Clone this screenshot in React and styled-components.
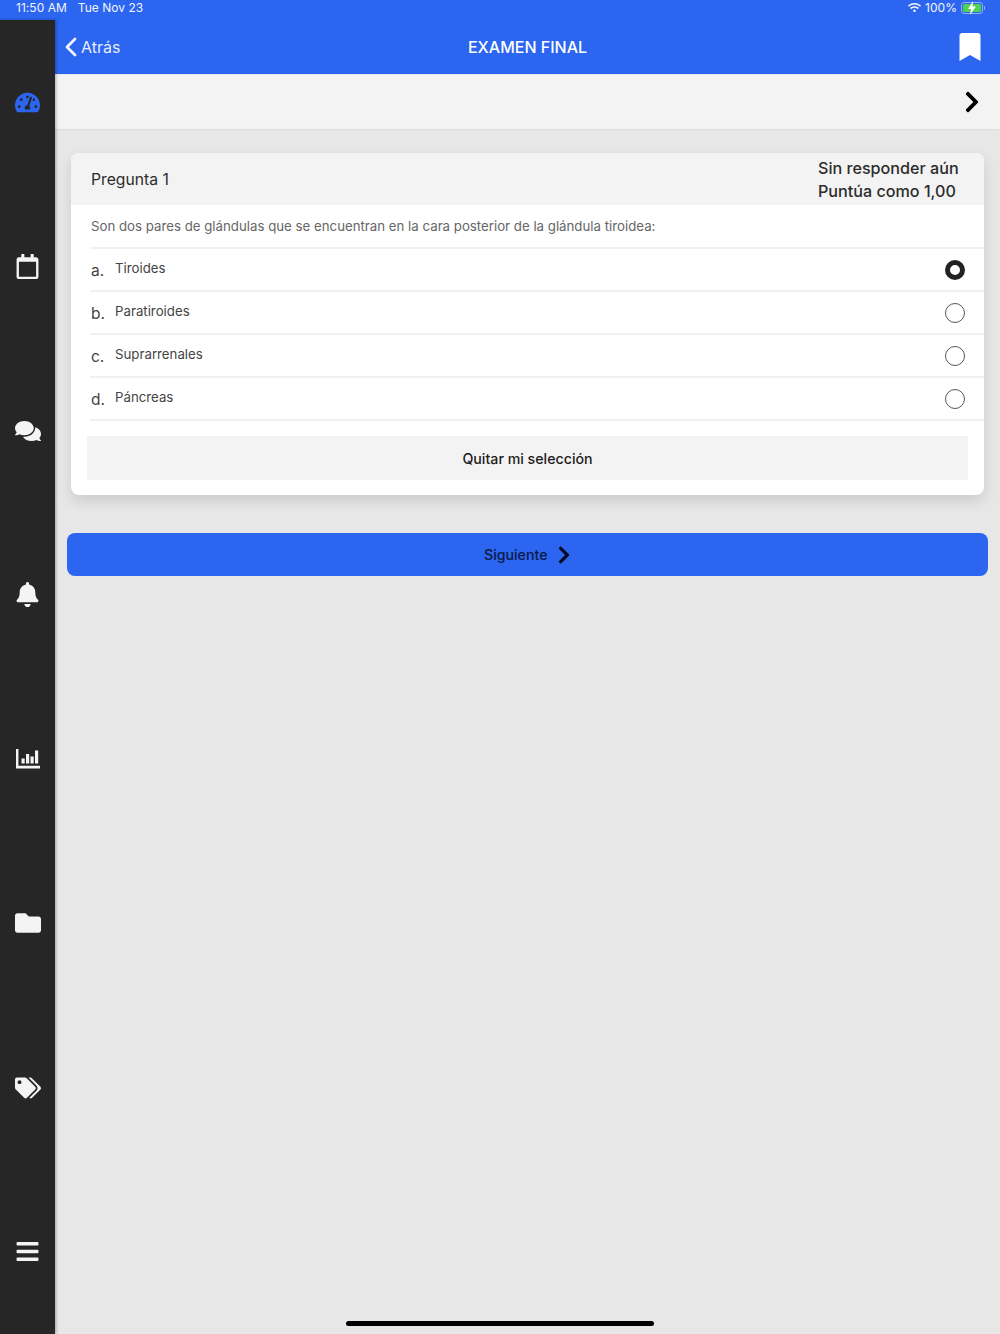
import React from "react";
import styled, { createGlobalStyle } from "styled-components";
import {
  FaTachometerAlt,
  FaRegCalendar,
  FaComments,
  FaBell,
  FaFolder,
  FaTags,
  FaBars,
  FaBookmark,
  FaChevronRight,
  FaWifi,
} from "react-icons/fa";

const Global = createGlobalStyle`
  html, body { margin: 0; padding: 0; background: #e7e7e7; }
  * { box-sizing: border-box; }
  body { font-family: Inter, "Liberation Sans", sans-serif; }
`;

const Page = styled.div`
  position: relative;
  width: 1000px;
  height: 1334px;
  overflow: hidden;
  display: flex;
  flex-direction: column;
  background: #e7e7e7;
`;

const StatusBar = styled.div`
  height: 20px;
  flex: none;
  background: #2b65f0;
  color: #f2f5ff;
  font-size: 12px;
  letter-spacing: 0.03px;
  padding: 0 17px 5px 16px;
  display: flex;
  align-items: center;
  justify-content: space-between;
`;

const StatusLeft = styled.div`
  display: flex;
  gap: 11px;
`;

const StatusRight = styled.div`
  display: flex;
  align-items: center;
  gap: 4px;
`;

const Battery = styled.div`
  position: relative;
  width: 22px;
  height: 12px;
  border: 1px solid #8fb0f5;
  border-radius: 3px;
  padding: 1px;
  display: flex;

  &::after {
    content: "";
    position: absolute;
    right: -3px;
    top: 3px;
    width: 1.5px;
    height: 4px;
    border-radius: 0 1px 1px 0;
    background: #8fb0f5;
  }
`;

const BatteryFill = styled.div`
  flex: 1;
  background: #4fd24f;
  border-radius: 1.5px;
`;

const Bolt = styled.svg`
  position: absolute;
  left: 5px;
  top: -2px;
  width: 10px;
  height: 14px;
`;

const Body = styled.div`
  flex: 1;
  display: flex;
  min-height: 0;
`;

const Sidebar = styled.nav`
  width: 55px;
  flex: none;
  padding-left: 0.5px;
  background: #262626;
  display: flex;
  flex-direction: column;
  justify-content: space-around;
  align-items: center;
  box-shadow: 1px 0 3px rgba(0, 0, 0, 0.3);
  position: relative;
  z-index: 2;
`;

const NavIcon = styled.div`
  height: 28px;
  width: 28px;
  display: flex;
  align-items: center;
  justify-content: center;
  color: ${(p) => (p.$active ? "#2b65f0" : "#f4f4f4")};
  font-size: ${(p) => p.$size || 25}px;
`;

const Main = styled.main`
  flex: 1;
  min-width: 0;
  display: flex;
  flex-direction: column;
`;

const TopBar = styled.header`
  height: 54px;
  flex: none;
  background: #2b65f0;
  color: #fff;
  display: grid;
  grid-template-columns: 1fr auto 1fr;
  align-items: center;
  padding: 0 9px;
`;

const Back = styled.div`
  display: flex;
  align-items: center;
  gap: 4px;
  font-size: 16px;
  color: #e6ecfd;
`;

const Title = styled.h1`
  margin: 0;
  font-size: 16px;
  font-weight: 500;
  color: #fff;
`;

const BookmarkSlot = styled.div`
  display: flex;
  justify-content: flex-end;
  padding-right: 7px;
  font-size: 28px;
  line-height: 0;
`;

const SubBar = styled.div`
  height: 54px;
  flex: none;
  margin-top: 1px;
  background: #f3f3f3;
  display: flex;
  align-items: center;
  justify-content: flex-end;
  padding-right: 16px;
  font-size: 24px;
  color: #000;
  box-shadow: 0 1px 2px rgba(0, 0, 0, 0.05);
`;

const Content = styled.div`
  padding: 24px 12px 0;
  display: flex;
  flex-direction: column;
`;

const Card = styled.section`
  margin: 0 4px;
  height: 342px;
  background: #fff;
  border-radius: 8px;
  overflow: hidden;
  box-shadow: 0 6px 14px rgba(0, 0, 0, 0.12);
  display: flex;
  flex-direction: column;
`;

const CardHead = styled.div`
  height: 52px;
  flex: none;
  background: #f3f3f3;
  display: flex;
  align-items: center;
  justify-content: space-between;
  padding: 0 25px 0 20px;
  color: #2c2c2c;
`;

const QuestionNo = styled.div`
  font-size: 15.7px;
`;

const Meta = styled.div`
  width: 141px;
  margin-top: 2px;
  font-size: 16.15px;
  font-weight: 500;
  line-height: 23px;
  white-space: nowrap;
`;

const QuestionText = styled.div`
  height: 44px;
  margin-left: 19px;
  padding: 13px 0 0 1px;
  font-size: 13.25px;
  line-height: 17px;
  color: #666;
  border-bottom: 2px solid #f1f1f1;
  white-space: nowrap;
`;

const Option = styled.div`
  height: 43px;
  margin-left: 19px;
  padding: 0 19px 0 1px;
  border-bottom: 2px solid #f1f1f1;
  display: flex;
  align-items: center;
  color: #444;
`;

const Letter = styled.span`
  width: 24px;
  font-size: 15.5px;
  padding-top: 1px;
`;

const OptionLabel = styled.span`
  flex: 1;
  font-size: 13.25px;
  margin-top: -3px;
`;

const Radio = styled.span`
  width: 20px;
  height: 20px;
  border-radius: 50%;
  border: ${(p) => (p.$checked ? "5.5px solid #222" : "1.2px solid #555")};
  background: #fff;
`;

const ClearButton = styled.button`
  height: 44px;
  margin: 15px 16px 0;
  border: 0;
  background: #f3f3f3;
  color: #1c1c1c;
  font: 500 14.2px Inter, "Liberation Sans", sans-serif;
`;

const NextButton = styled.button`
  margin-top: 38px;
  height: 43px;
  padding: 0 0 0 3px;
  border: 0;
  border-radius: 8px;
  background: #2b65f0;
  color: #0c1a4a;
  font: 500 14.2px Inter, "Liberation Sans", sans-serif;
  display: flex;
  align-items: center;
  justify-content: center;
  gap: 6.5px;
`;

const NextIcon = styled.span`
  color: #050a20;
  font-size: 20px;
  line-height: 0;
`;

const HomeIndicator = styled.div`
  position: absolute;
  left: 346px;
  bottom: 8px;
  width: 308px;
  height: 5px;
  border-radius: 3px;
  background: #000;
`;

const BackChevron = () => (
  <svg width="13" height="20" viewBox="0 0 13 20" fill="none" stroke="#f2f5ff" strokeWidth="2.8" strokeLinecap="round" strokeLinejoin="round">
    <path d="M11 2 3 10l8 8" />
  </svg>
);

const ChartIcon = () => (
  <svg width="26" height="22" viewBox="0 0 26 22" fill="#f4f4f4">
    <path d="M1 1h2.4v16.8H25v2.7H1z" />
    <rect x="6.5" y="10.5" width="3.2" height="5" />
    <rect x="11" y="6" width="3.2" height="9.5" />
    <rect x="15.5" y="8.5" width="3.2" height="7" />
    <rect x="20" y="2.5" width="3.2" height="13" />
  </svg>
);

const options = [
  ["a.", "Tiroides", true],
  ["b.", "Paratiroides", false],
  ["c.", "Suprarrenales", false],
  ["d.", "Páncreas", false],
];

export default function App() {
  return (
    <Page>
      <Global />
      <StatusBar>
        <StatusLeft>
          <span>11:50 AM</span>
          <span>Tue Nov 23</span>
        </StatusLeft>
        <StatusRight>
          <FaWifi size={13} />
          <span>100%</span>
          <Battery>
            <BatteryFill />
            <Bolt viewBox="0 0 10 14">
              <path d="M6 0 1 8h3l-1 6 6-8.5H5.6z" fill="#fff" />
            </Bolt>
          </Battery>
        </StatusRight>
      </StatusBar>
      <Body>
        <Sidebar>
          <NavIcon $active><FaTachometerAlt /></NavIcon>
          <NavIcon><FaRegCalendar /></NavIcon>
          <NavIcon $size={26}><FaComments /></NavIcon>
          <NavIcon><FaBell /></NavIcon>
          <NavIcon><ChartIcon /></NavIcon>
          <NavIcon $size={26}><FaFolder /></NavIcon>
          <NavIcon $size={26}><FaTags /></NavIcon>
          <NavIcon $size={25}><FaBars /></NavIcon>
        </Sidebar>
        <Main>
          <TopBar>
            <Back>
              <BackChevron />
              <span>Atrás</span>
            </Back>
            <Title>EXAMEN FINAL</Title>
            <BookmarkSlot><FaBookmark /></BookmarkSlot>
          </TopBar>
          <SubBar><FaChevronRight /></SubBar>
          <Content>
            <Card>
              <CardHead>
                <QuestionNo>Pregunta 1</QuestionNo>
                <Meta>
                  <div>Sin responder aún</div>
                  <div>Puntúa como 1,00</div>
                </Meta>
              </CardHead>
              <QuestionText>
                Son dos pares de glándulas que se encuentran en la cara posterior de la glándula tiroidea:
              </QuestionText>
              {options.map(([letter, label, checked]) => (
                <Option key={letter}>
                  <Letter>{letter}</Letter>
                  <OptionLabel>{label}</OptionLabel>
                  <Radio $checked={checked} />
                </Option>
              ))}
              <ClearButton>Quitar mi selección</ClearButton>
            </Card>
            <NextButton>
              Siguiente
              <NextIcon><FaChevronRight /></NextIcon>
            </NextButton>
          </Content>
        </Main>
      </Body>
      <HomeIndicator />
    </Page>
  );
}
